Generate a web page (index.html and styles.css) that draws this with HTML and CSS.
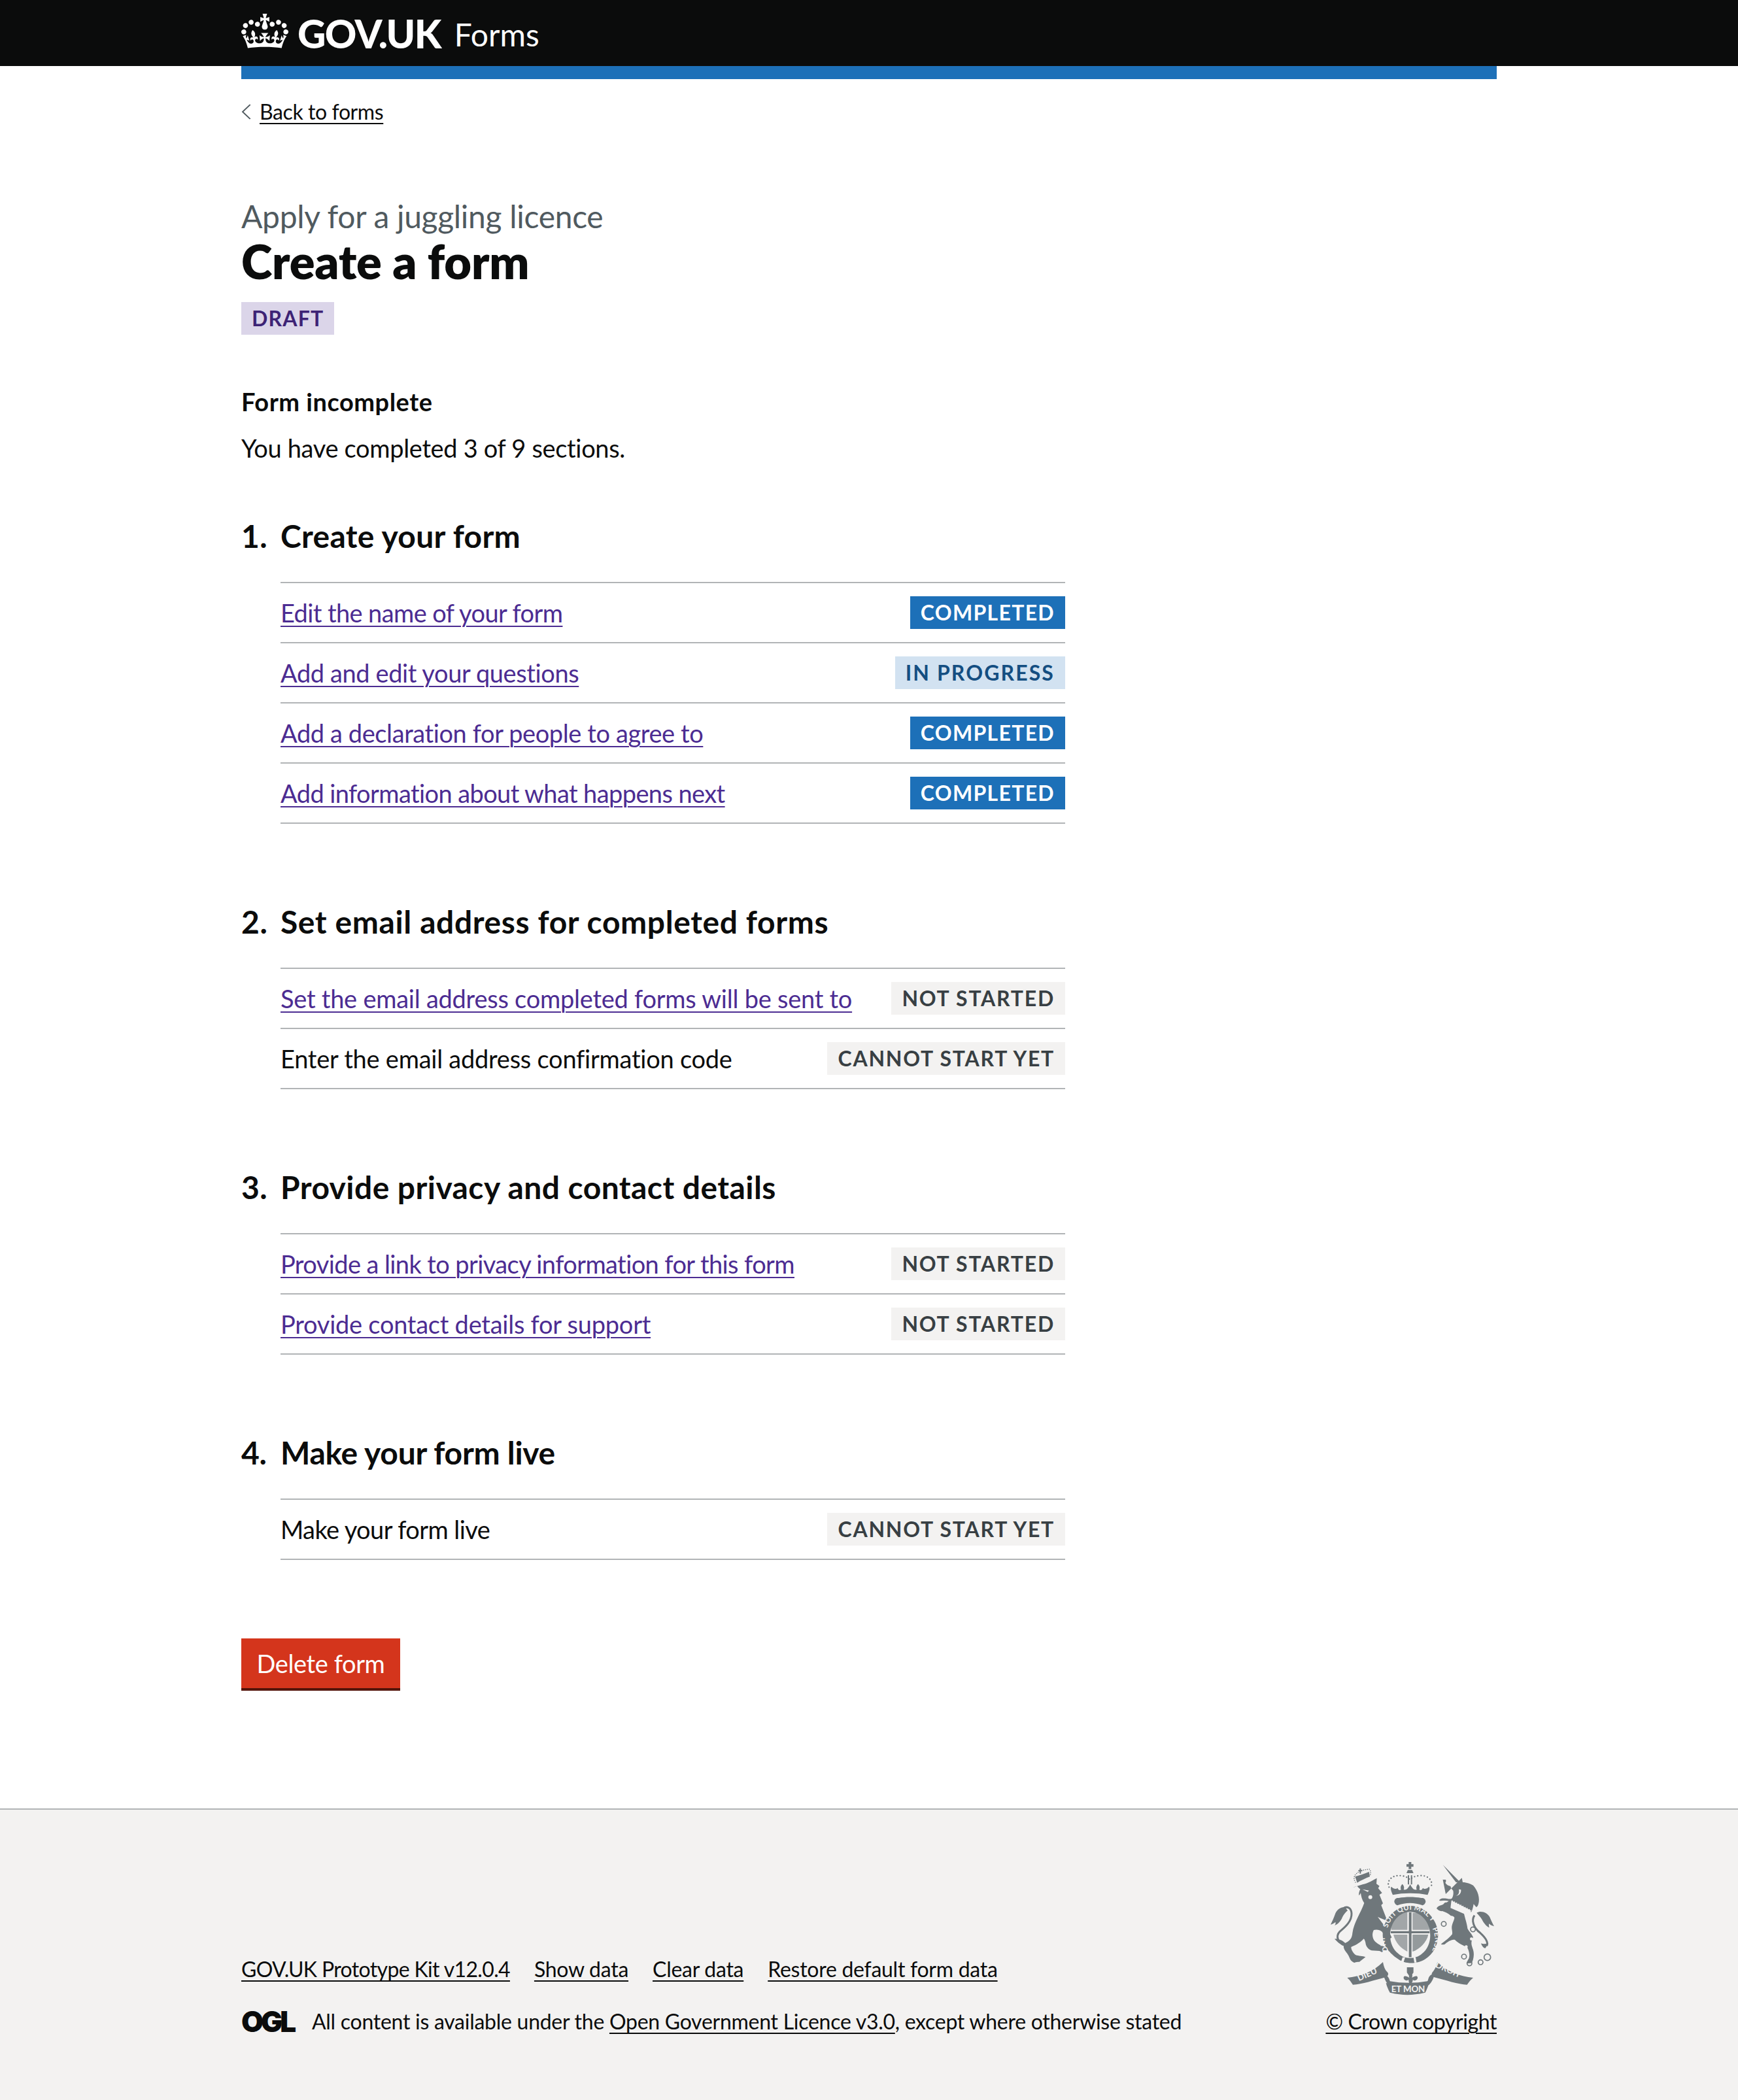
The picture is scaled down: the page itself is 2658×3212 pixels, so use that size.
FILE: index.html
```html
<!DOCTYPE html>
<html lang="en">
<head>
<meta charset="utf-8">
<title>Create a form - GOV.UK Forms</title>
<link rel="stylesheet" href="styles.css">
</head>
<body>
<header class="header">
  <div class="container header-inner">
    <svg class="crown" viewBox="0 0 132 97" aria-hidden="true"><path fill="#fff" fill-rule="evenodd" d="M25 30.2c3.5 1.5 7.7-.2 9.1-3.7 1.5-3.6-.2-7.8-3.9-9.2-3.6-1.4-7.6.3-9.1 3.9-1.4 3.5.3 7.5 3.9 9zM9 39.5c3.6 1.5 7.8-.2 9.2-3.7 1.5-3.6-.2-7.8-3.9-9.1-3.6-1.5-7.6.2-9.1 3.8-1.4 3.5.3 7.5 3.8 9zM4.4 57.2c3.5 1.5 7.7-.2 9.1-3.8 1.5-3.6-.2-7.7-3.9-9.1-3.5-1.5-7.6.3-9.1 3.8-1.4 3.5.3 7.6 3.9 9.1zm38.3-21.4c3.5 1.5 7.7-.2 9.1-3.8 1.5-3.6-.2-7.7-3.9-9.1-3.6-1.5-7.6.3-9.1 3.8-1.3 3.6.4 7.7 3.9 9.1zm64.4-5.6c-3.6 1.5-7.8-.2-9.1-3.7-1.5-3.6.2-7.8 3.8-9.2 3.6-1.4 7.7.3 9.2 3.9 1.3 3.5-.4 7.5-3.9 9zm15.9 9.3c-3.6 1.5-7.7-.2-9.1-3.7-1.5-3.6.2-7.8 3.7-9.1 3.6-1.5 7.7.2 9.2 3.8 1.5 3.5-.3 7.5-3.8 9zm4.7 17.7c-3.6 1.5-7.8-.2-9.2-3.8-1.5-3.6.2-7.7 3.9-9.1 3.6-1.5 7.7.3 9.2 3.8 1.3 3.5-.4 7.6-3.9 9.1zM89.3 35.8c-3.6 1.5-7.8-.2-9.2-3.8-1.4-3.6.2-7.7 3.9-9.1 3.6-1.5 7.7.3 9.2 3.8 1.4 3.6-.3 7.7-3.9 9.1zM69.7 17.7l8.9 4.7V9.3l-8.9 2.8c-.2-.3-.5-.6-.9-.9L72.4 0H59.6l3.5 11.2c-.3.3-.6.5-.9.9l-8.8-2.8v13.1l8.8-4.7c.3.3.6.7.9.9l-5 15.4v.1c-.2.8-.4 1.6-.4 2.4 0 4.1 3.1 7.5 7 8.1h.2c.3 0 .7.1 1 .1.4 0 .7 0 1-.1h.2c4-.6 7.1-4.1 7.1-8.1 0-.8-.1-1.7-.4-2.4V34l-5.1-15.4c.4-.2.7-.6 1-.9zM66 92.8c16.9 0 32.8 1.1 47.1 3.2 4-16.9 8.9-26.7 14-33.5l-9.6-3.4c1 4.9 1.1 7.2 0 10.2-1.5-1.4-3-4.3-4.2-8.7L108.6 76c2.8-2 5-3.2 7.5-3.3-4.4 9.4-10 11.9-13.6 11.2-4.3-.8-6.3-4.6-5.6-7.9 1-4.7 5.7-5.9 8-.5 4.3-8.7-3-11.4-7.6-8.8 7.1-7.2 7.9-13.5 2.1-21.1-8 6.1-8.1 12.3-4.5 20.8-4.7-5.4-12.1-2.5-9.5 6.2 3.4-5.2 7.9-2 7.2 3.1-.6 4.3-6.4 7.8-13.5 7.2-10.3-.9-10.9-8-11.2-13.8 2.5-.5 7.1 1.8 11 7.3L80.2 60c-4.1 4.4-8 5.3-12.3 5.4 1.4-4.4 8-11.6 8-11.6H55.5s6.4 7.2 7.9 11.6c-4.2-.1-8-1-12.3-5.4l1.4 16.4c3.9-5.5 8.5-7.7 10.9-7.3-.3 5.8-.9 12.8-11.1 13.8-7.2.6-12.9-2.9-13.5-7.2-.7-5 3.8-8.3 7.1-3.1 2.7-8.7-4.6-11.6-9.4-6.2 3.7-8.5 3.6-14.7-4.6-20.8-5.8 7.6-5 13.9 2.2 21.1-4.7-2.6-11.9.1-7.7 8.8 2.3-5.5 7.1-4.2 8.1.5.7 3.3-1.3 7.1-5.7 7.9-3.5.7-9-1.8-13.5-11.2 2.5.1 4.7 1.3 7.5 3.3l-4.7-15.4c-1.2 4.4-2.7 7.2-4.3 8.7-1.1-3-.9-5.3 0-10.2l-9.5 3.4c5 6.9 9.9 16.7 14 33.5 14.8-2.1 30.8-3.2 47.7-3.2z"/></svg>
    <span class="logotype">GOV.UK</span>
    <span class="service">Forms</span>
  </div>
</header>
<div class="container">
  <div class="header-rule"></div>
  <a class="back-link" href="#"><svg class="chevron" viewBox="2 0 11 24" preserveAspectRatio="none" aria-hidden="true"><path d="M12 1 3.500 12l8.500 11" fill="none" stroke="#505a5f" stroke-width="1.6"/></svg><span class="link-text">Back to forms</span></a>
  <main class="main">
    <p class="caption">Apply for a juggling licence</p>
    <h1 class="title">Create a form</h1>
    <strong class="tag tag-draft">Draft</strong>
    <h2 class="summary-title">Form incomplete</h2>
    <p class="summary">You have completed 3 of 9 sections.</p>

    <section class="section">
      <h2 class="section-title"><span class="section-num">1.</span>Create your form</h2>
      <ul class="task-list">
        <li class="task"><a class="task-link fit-tight" href="#">Edit the name of your form</a><strong class="tag tag-done">Completed</strong></li>
        <li class="task"><a class="task-link" href="#">Add and edit your questions</a><strong class="tag tag-progress">In progress</strong></li>
        <li class="task"><a class="task-link" href="#">Add a declaration for people to agree to</a><strong class="tag tag-done">Completed</strong></li>
        <li class="task"><a class="task-link fit-tight" href="#">Add information about what happens next</a><strong class="tag tag-done">Completed</strong></li>
      </ul>
    </section>

    <section class="section">
      <h2 class="section-title fit-wide"><span class="section-num">2.</span>Set email address for completed forms</h2>
      <ul class="task-list">
        <li class="task"><a class="task-link fit-loose" href="#">Set the email address completed forms will be sent to</a><strong class="tag tag-grey">Not started</strong></li>
        <li class="task"><span class="task-text fit-loose">Enter the email address confirmation code</span><strong class="tag tag-grey">Cannot start yet</strong></li>
      </ul>
    </section>

    <section class="section">
      <h2 class="section-title fit-mid"><span class="section-num">3.</span>Provide privacy and contact details</h2>
      <ul class="task-list">
        <li class="task"><a class="task-link fit-tight" href="#">Provide a link to privacy information for this form</a><strong class="tag tag-grey">Not started</strong></li>
        <li class="task"><a class="task-link fit-loose" href="#">Provide contact details for support</a><strong class="tag tag-grey">Not started</strong></li>
      </ul>
    </section>

    <section class="section">
      <h2 class="section-title fit-narrow"><span class="section-num">4.</span>Make your form live</h2>
      <ul class="task-list">
        <li class="task"><span class="task-text fit-tight">Make your form live</span><strong class="tag tag-grey">Cannot start yet</strong></li>
      </ul>
    </section>

    <a class="button-danger" href="#">Delete form</a>
  </main>
</div>
<footer class="footer">
  <div class="container footer-inner">
    <div class="footer-meta">
      <ul class="footer-links">
        <li><a class="footer-link kit-link" href="#">GOV.UK Prototype Kit v12.0.4</a></li>
        <li><a class="footer-link" href="#">Show data</a></li>
        <li><a class="footer-link" href="#">Clear data</a></li>
        <li><a class="footer-link" href="#">Restore default form data</a></li>
      </ul>
      <div class="licence">
        <span class="ogl">OGL</span>
        <span class="licence-text">All content is available under the <a class="footer-link" href="#">Open Government Licence v3.0</a>, except where otherwise stated</span>
      </div>
    </div>
    <div class="footer-crown">
      <svg class="crest" viewBox="160 85 750 612" aria-hidden="true">
        <g fill="#6f777b">
          <path d="M518 85h12v10h10v12h-10v10h-12v-10h-10V95h10z"/>
          <path d="M514 122h20l6 14h-32z"/>
          <path d="M514 146h6v42h-6zM528 146h6v42h-6z"/>
          <path d="M445 236c-8-20-12-32-6-38 10 12 22 12 28 6 4 10 10 12 16 8-4-12 0-20 6-26 8 8 10 18 6 26 12 2 18-2 30-24 12 22 18 26 30 24-4-8-2-18 6-26 6 6 10 14 6 26 6 4 12 2 16-8 6 6 18 6 28-6 6 6 2 18-6 38-48-10-112-10-160 0z"/>
          <path d="M452 268c0-12 8-20 20-18 34-6 70-6 104 0 12-2 20 6 20 18-2 8-8 14-14 16-38-14-78-14-116 0-6-2-12-8-14-16z"/>
          <path fill-rule="evenodd" d="M525 286c70 0 128 62 128 136 0 46-24 86-58 108-36 24-92 26-126 0-42-28-70-64-70-108 0-74 58-136 126-136zm0 28c-50 0-92 48-92 108 0 34 14 66 38 84 16 14 36 20 54 20s38-6 54-20c24-18 38-50 38-84 0-60-42-108-92-108z"/>
          <path d="M519 316h12v206h-12z"/>
          <path d="M436 402h178v10H436z"/>
          <path d="M446 330c20-12 44-14 66-14v80h-74c-2-24 0-50 8-66zM536 318c26 0 48 4 64 14 10 20 14 42 12 64h-76z" opacity=".62"/>
          <path d="M448 418h64v78c-28-14-54-38-64-78z" opacity=".62"/>
          <path d="M536 418h72c-6 34-40 68-72 78z" opacity=".72"/>
          <path d="M262 203c20-10 50-14 72-24 14-6 26-14 38-20l-2 26 14 10-6 10 18 22-12 8 16 40-8 8 28 72c-16-6-30-12-44-18l30 40c6 0 12 4 14 10l20 44c-4 6-10 6-14 4-14-8-22-16-30-30-10-8-24-12-38-8-8 14-8 32 2 48 10 14 34 26 62 34l-4 12-14-2-8 10-12-6-36-2c-16-6-26-18-28-36-2-8-4-14-8-18-12 14-32 28-58 38 0 10 6 24 20 36 14 6 34 4 46 10-10 8-18 14-28 22-8 0-16 0-22 4-8-2-18-8-24-24-8-22-22-28-26-46-2-14 4-20 14-24 18-10 24-22 26-42 6-48 38-92 54-138-10-14-14-30-16-46-2 4-4 8-8 12-2-10 2-20 6-30-6-4-10-8-14-14z"/>
          <path fill="none" stroke="#6f777b" stroke-width="9" d="M232 462c-40 0-50-36-30-58 26-22 56-48 54-84-2-26-22-34-38-22"/>
          <path d="M226 292c-18-2-40 12-46 34-4 12-12 30-20 46 6-2 16-6 22-12 2 6 0 12-4 16 14-4 30-20 36-38 6-12 16-24 24-30z"/>
          <path d="M178 438c14-2 34 4 50 20l-8 12c-8-2-22-12-42-32z"/>
          <path d="M272 152c20-6 46-14 64-22l4 22c-20 8-42 18-58 28z"/>
          <path fill="none" stroke="#6f777b" stroke-width="5" stroke-linecap="round" stroke-dasharray="0 9" d="M274 178c-20-30 10-56 64-60 8 10 6 20 2 34"/>
          <path d="M287 122h6v-8h6v8h6v6h-6v10h-6v-10h-6z"/>
          <path d="M675 98l76 76c-6 4-12 4-16 4z"/>
          <path d="M688 232l50-50 24-24 4 20c18 0 36 8 48 14 22 24 32 60 24 86-2 8-6 14-10 14l-12-14c-2 10-4 24-10 36-14 4-24 6-34 8 4 20 14 46 16 68 6 12 18 22 26 40-4 8-8 16-8 26 0 16 8 26 10 42 2 14 0 32-8 50-8 2-16 2-22 2-2-4 2-14 8-22 6-14 2-34-8-52-14-6-40-18-56-34-14-4-34 10-46 20-6 2-12 2-18 0 18-14 40-30 52-46 2-12-4-24-2-36 2-14 10-26 12-38 0-6-8-10-16-10-12-12-26-18-40-22-8 2-20-4-26-12 4-10 14-14 24-16 10-4 24-12 32-18-16-4-30 0-44-2 2-8 14-12 22-10 8-4 24 8 36 0 8-12 8-26 6-36-6-6-10-12-12-20-10-2-20-8-24-16 4-4 4-10 2-14-6 0-14 2-14-4z"/>
          <path fill="none" stroke="#6f777b" stroke-width="9" d="M820 330c-16 22-4 58 26 80 22 20 40 42 30 60"/>
          <path d="M830 318c20-12 50 0 60 20 6 14 12 28 20 42-8-2-18-6-24-12 0 6 0 12 2 18-14-6-26-22-34-38-6-10-14-18-24-30z"/>
          <path d="M850 458c8 4 22 4 34 0l-14 22c-8 2-16-10-20-22z"/>
        </g>
        <g fill="#f3f2f1">
          <circle cx="342" cy="246" r="9"/>
          <path d="M306 210l30 6-6 6z"/>
          <path d="M748 210c4 16-2 26-14 30 14 0 26-10 24-28z"/>
          <path d="M714 262l90 46-6 26-88-38z"/>
          <circle cx="806" cy="438" r="7"/><circle cx="782" cy="474" r="7"/>
          <path d="M642 324l36 4-6 18z"/>
          <circle cx="679" cy="369" r="12"/>
          <path d="M490 522h12l-8 24h-12zM540 522h10l4 24h-10z"/>
        </g>
        <g fill="none" stroke="#6f777b" stroke-width="5">
          <path stroke-width="7" stroke-linecap="round" stroke-dasharray="0 15" d="M428 200c-14-30 16-58 56-52 20 2 30 8 40 18 10-10 20-16 40-18 40-6 70 22 56 52"/>
          <circle cx="690" cy="284" r="11"/>
          <circle cx="679" cy="369" r="11"/>
          <circle cx="813" cy="394" r="11"/>
          <circle cx="772" cy="519" r="11"/>
          <circle cx="797" cy="550" r="11"/>
          <circle cx="848" cy="545" r="11"/>
          <circle cx="879" cy="522" r="15"/>
          <path stroke="#f3f2f1" stroke-width="4" stroke-dasharray="5 6" d="M716 262l90 46"/>
        </g>
        <g>
          <defs>
            <path id="garter-top" d="M421 388c14-52 58-84 104-84 52 0 96 32 116 96"/>
            <path id="garter-right" d="M627 390c24 50 10 100-28 134"/>
            <path id="garter-left" d="M445 512c-24-22-38-50-36-80"/>
          </defs>
          <text class="crest-garter"><textPath href="#garter-top">SOIT QUI MAL Y</textPath></text>
          <text class="crest-garter"><textPath href="#garter-right">PENSE</textPath></text>
          <text class="crest-garter"><textPath href="#garter-left">HONI</textPath></text>
        </g>
        <g fill="#6f777b">
          <path d="M236 616c60-6 118-26 164-72 4 20 8 34 20 46 10 10 0 22-8 24-50 12-110 34-150 34-8-12-16-24-26-32z"/>
          <path d="M400 596c4 18 14 42 26 54 56 14 126 14 184 0 14-12 24-34 28-54-4 2-10 6-16 6-16 10-12 24-18 30-56 10-118 10-172 0-4-14-8-26-32-36z"/>
          <path d="M414 640c58 14 142 14 198 0-6 18-12 34-18 44-54 14-110 14-162 0-8-14-14-28-18-44z"/>
          <path d="M814 616c-60-6-118-26-164-72-6 18-10 32-22 46-10 10 0 22 8 24 50 12 110 34 150 34 8-12 18-24 28-32z"/>
          <path d="M510 568h30v24l-8 12h-14l-8-12z"/>
          <path d="M525 586c10 12 12 20 8 30 10-6 24-12 26-2 2 12-14 20-22 10 0 6 0 10-8 20l-4 2c-8-10-6-14-8-22-8 10-24 2-22-10 2-10 16-4 26 2-4-10-2-18 4-30z"/>
        </g>
        <text class="crest-scroll" transform="translate(290 632) rotate(-24)">DIEU</text>
        <text class="crest-scroll" x="438" y="683">ET MON</text>
        <text class="crest-scroll" transform="translate(638 566) rotate(24)">DROIT</text>
      </svg>
      <a class="footer-link copyright" href="#">© Crown copyright</a>
    </div>
  </div>
</footer>
</body>
</html>
```
FILE: styles.css
```css
* { box-sizing: border-box; }
html, body { margin: 0; padding: 0; }
body {
  font-family: "Lato", "Noto Sans", sans-serif;
  color: #0b0c0c;
  background: #fff;
  font-size: 38px;
  line-height: 50px;
  letter-spacing: -0.4px;
}
.container { width: 1920px; margin: 0 auto; }
p, h1, h2, ul { margin: 0; padding: 0; }
ul { list-style: none; }
a { color: inherit; text-decoration: underline; text-decoration-thickness: 2px; text-underline-offset: 5px; }

.header { background: #0b0c0c; height: 101px; color: #fff; }
.header-inner { display: flex; align-items: center; height: 101px; }
.crown { width: 72px; height: 53px; margin-top: -6px; }
.logotype { font-size: 60px; font-weight: 900; line-height: 1; margin-left: 14px; letter-spacing: -1.6px; margin-top: 1px; }
.service { font-size: 48px; line-height: 1; margin-left: 21px; letter-spacing: 0; margin-top: 4px; }
.header-rule { height: 20px; background: #1d70b8; }

.back-link { display: inline-flex; align-items: center; margin-top: 30px; height: 40px; font-size: 32px; line-height: 40px; text-decoration: none; }
.chevron { width: 15px; height: 24px; margin-right: 13px; }
.link-text { text-decoration: underline; text-decoration-thickness: 2px; text-underline-offset: 5px; }

.caption { margin-top: 108px; font-size: 48px; line-height: 60px; color: #505a5f; letter-spacing: -0.3px; }
.title { margin-top: -2px; font-size: 72px; line-height: 80px; font-weight: 800; letter-spacing: -0.15px; }

.tag { display: inline-block; padding: 10px 16px; font-size: 32px; line-height: 30px; font-weight: 700; letter-spacing: 1.75px; text-transform: uppercase; white-space: nowrap; }
.main > .tag { margin-top: 23px; vertical-align: top; }
.tag-draft { background: #dbd5e9; color: #3d2375; letter-spacing: 1.2px; }
.tag-done { background: #1d70b8; color: #fff; letter-spacing: 1.3px; }
.tag-progress { background: #d2e2f1; color: #144e81; letter-spacing: 2.1px; }
.tag-grey { background: #f3f2f1; color: #383f43; }

.summary-title { margin-top: 77px; font-size: 38px; line-height: 50px; font-weight: 700; letter-spacing: 0.5px; }
.summary { margin-top: 21px; letter-spacing: -0.33px; }

.section { margin-top: 80px; margin-bottom: 120px; }
.section + .section { margin-top: 0; }
.section-title { display: flex; font-size: 48px; line-height: 60px; font-weight: 700; letter-spacing: 0.3px; margin-bottom: 40px; }
.section-num { width: 60px; flex: none; }
.task-list { margin-left: 60px; width: 1200px; border-top: 2px solid #b1b4b6; }
.task { display: flex; justify-content: space-between; align-items: center; padding: 20px 0; border-bottom: 2px solid #b1b4b6; height: 92px; }
.task-link { color: #4c2c92; }
.fit-tight { letter-spacing: -0.6px; }
.fit-loose { letter-spacing: -0.25px; }
.fit-wide { letter-spacing: 0.6px; }
.fit-mid { letter-spacing: 0.42px; }
.fit-narrow { letter-spacing: -0.3px; }

.button-danger { display: block; width: 243px; height: 80px; background: #d4351c; border-bottom: 4px solid #55150b; color: #fff; text-align: center; font-size: 38px; line-height: 76px; text-decoration: none; }

.main { margin-bottom: 180px; }
.footer { background: #f3f2f1; border-top: 2px solid #b1b4b6; height: 446px; padding-top: 80px; font-size: 32px; line-height: 40px; letter-spacing: -0.27px; }
.footer-inner { display: flex; justify-content: space-between; align-items: flex-end; }
.footer-links { display: flex; gap: 37px; margin-bottom: 40px; }
.kit-link { letter-spacing: -0.65px; }
.copyright { letter-spacing: -0.4px; }
.licence { display: flex; align-items: center; gap: 26px; }
.ogl { width: 82px; font-family: "Inter", sans-serif; font-weight: 900; font-size: 44px; line-height: 40px; letter-spacing: -4px; }
.footer-crown { display: flex; flex-direction: column; align-items: flex-end; }
.crest { width: 250px; height: 204px; margin-right: 4px; margin-bottom: 20px; }
.crest-garter { font-family: "Lato", sans-serif; font-size: 33px; font-weight: 700; fill: #f3f2f1; letter-spacing: 1px; }
.crest-scroll { font-family: "Lato", sans-serif; font-size: 40px; font-weight: 700; fill: #f3f2f1; }
```
